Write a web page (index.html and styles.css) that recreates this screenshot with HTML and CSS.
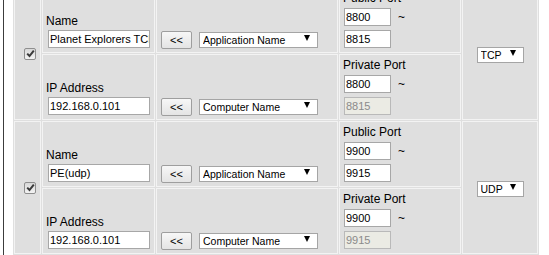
FILE: index.html
```html
<!DOCTYPE html>
<html lang="en">
<head>
    <meta charset="UTF-8">
    <title>Port Forwarding Rules</title>
    <link rel="stylesheet" href="styles.css">
</head>
<body>

<div class="panel">
    <div class="rules">
        <!-- rule 1 : TCP -->
        <div class="cell check">
            <span class="tick"><svg width="9" height="9" viewBox="0 0 9 9"><path d="M1.2 4.6 L3.5 7 L7.8 1.6"/></svg></span>
        </div>
        <div class="cell field">
            <label>Name</label>
            <input type="text" class="txt name" value="Planet Explorers TCP">
        </div>
        <div class="cell pick">
            <button class="copy">&lt;&lt;</button>
            <span class="dd app"><select><option>Application Name</option></select></span>
        </div>
        <div class="cell ports">
            <label>Public Port</label>
            <div class="port-line"><input type="text" class="txt port" value="8800"><span class="tilde">~</span></div>
            <div class="port-line"><input type="text" class="txt port" value="8815"></div>
        </div>
        <div class="cell proto">
            <span class="dd small"><select><option>TCP</option></select></span>
        </div>
        <div class="cell field">
            <label>IP Address</label>
            <input type="text" class="txt name" value="192.168.0.101">
        </div>
        <div class="cell pick">
            <button class="copy">&lt;&lt;</button>
            <span class="dd app"><select><option>Computer Name</option></select></span>
        </div>
        <div class="cell ports">
            <label>Private Port</label>
            <div class="port-line"><input type="text" class="txt port" value="8800"><span class="tilde">~</span></div>
            <div class="port-line"><input type="text" class="txt port" value="8815" disabled></div>
        </div>

        <!-- rule 2 : UDP -->
        <div class="cell check">
            <span class="tick"><svg width="9" height="9" viewBox="0 0 9 9"><path d="M1.2 4.6 L3.5 7 L7.8 1.6"/></svg></span>
        </div>
        <div class="cell field">
            <label>Name</label>
            <input type="text" class="txt name" value="PE(udp)">
        </div>
        <div class="cell pick">
            <button class="copy">&lt;&lt;</button>
            <span class="dd app"><select><option>Application Name</option></select></span>
        </div>
        <div class="cell ports">
            <label>Public Port</label>
            <div class="port-line"><input type="text" class="txt port" value="9900"><span class="tilde">~</span></div>
            <div class="port-line"><input type="text" class="txt port" value="9915"></div>
        </div>
        <div class="cell proto">
            <span class="dd small"><select><option>UDP</option></select></span>
        </div>
        <div class="cell field">
            <label>IP Address</label>
            <input type="text" class="txt name" value="192.168.0.101">
        </div>
        <div class="cell pick">
            <button class="copy">&lt;&lt;</button>
            <span class="dd app"><select><option>Computer Name</option></select></span>
        </div>
        <div class="cell ports">
            <label>Private Port</label>
            <div class="port-line"><input type="text" class="txt port" value="9900"><span class="tilde">~</span></div>
            <div class="port-line"><input type="text" class="txt port" value="9915" disabled></div>
        </div>
    </div>
</div>

</body>
</html>
```

FILE: styles.css
```css
/* page frame */
body {
    margin: 0;
    background: #fff;
    font-family: "Liberation Sans", Arial, sans-serif;
    color: #000;
}

.panel {
    margin: -14px 0 0 3px;
    border-left: 1px solid #3c3c3c;
    padding-left: 9px;
    min-height: 300px;
}

/* rule grid: check | name | picker | ports | protocol */
.rules {
    display: grid;
    grid-template-columns: 27px 113px 182px 122px 76px;
    grid-auto-rows: 66px;
    gap: 1px;
    padding: 1px;
    width: max-content;
    background: #dfdfdf;
}

.cell {
    box-sizing: border-box;
    background: #dfdfdf;
    border: 1px solid #f3f3f3;
}

.check {
    grid-row: span 2;
    display: flex;
    align-items: center;
    padding-left: 9px;
}

.proto {
    grid-row: span 2;
    display: flex;
    align-items: center;
    justify-content: center;
}

.field {
    display: flex;
    flex-direction: column;
    justify-content: flex-end;
    padding: 0 3px 4px;
}

.field label,
.ports label {
    display: block;
    font-size: 12px;
    line-height: 15px;
}

.field label {
    margin-bottom: 1px;
}

.pick {
    display: flex;
    align-items: flex-end;
    padding: 0 0 3px 4px;
}

.ports {
    padding: 3px 0 4px 3px;
}

.ports label {
    margin-bottom: 2px;
}

.port-line {
    display: flex;
    align-items: center;
}

.port-line + .port-line {
    margin-top: 4px;
}

.tilde {
    margin-left: 7px;
    font-size: 12px;
}

/* form controls */
.txt {
    box-sizing: border-box;
    height: 18px;
    margin: 0;
    padding: 0 0 0 1px;
    border: 1px solid #a7a7a7;
    background: #fff;
    font-family: "Liberation Sans", Arial, sans-serif;
    font-size: 11px;
    color: #000;
    outline: none;
}

.txt.name {
    width: 102px;
    margin-left: 2px;
}

.txt.port {
    width: 47px;
    margin-left: 1px;
}

.txt:disabled {
    background: #ebebe4;
    border-color: #b9b9b9;
    color: #8a8a8a;
}

.copy {
    box-sizing: border-box;
    width: 31px;
    height: 18px;
    margin: 0;
    padding: 0;
    border: 1px solid #9e9e9e;
    border-radius: 2px;
    background: linear-gradient(#f7f7f7, #e4e4e4);
    font-family: "Liberation Sans", Arial, sans-serif;
    font-size: 11px;
    color: #000;
}

.dd {
    position: relative;
    display: inline-block;
}

.dd select {
    -webkit-appearance: none;
    appearance: none;
    box-sizing: border-box;
    height: 16px;
    margin: 0;
    padding: 0 0 0 3px;
    border: 1px solid #a5a5a5;
    border-radius: 0;
    background: #fff;
    font-family: "Liberation Sans", Arial, sans-serif;
    font-size: 10.5px;
    line-height: 14px;
    color: #000;
    outline: none;
}

/* small black drop arrow */
.dd::after {
    content: "";
    position: absolute;
    top: 5px;
    right: 8px;
    border-left: 3px solid transparent;
    border-right: 3px solid transparent;
    border-top: 6px solid #000;
    pointer-events: none;
}

.dd.app {
    margin: 0 0 1px 7px;
}

.dd.app select {
    width: 119px;
}

.dd.small select {
    width: 47px;
}

/* checked (greyed) checkbox */
.tick {
    box-sizing: border-box;
    display: flex;
    align-items: center;
    justify-content: center;
    width: 12px;
    height: 12px;
    border: 1px solid #8e8e8e;
    border-radius: 2px;
    background: linear-gradient(#d8d8d8, #f3f3f3);
}

.tick path {
    fill: none;
    stroke: #3a3a3a;
    stroke-width: 2;
}
```
